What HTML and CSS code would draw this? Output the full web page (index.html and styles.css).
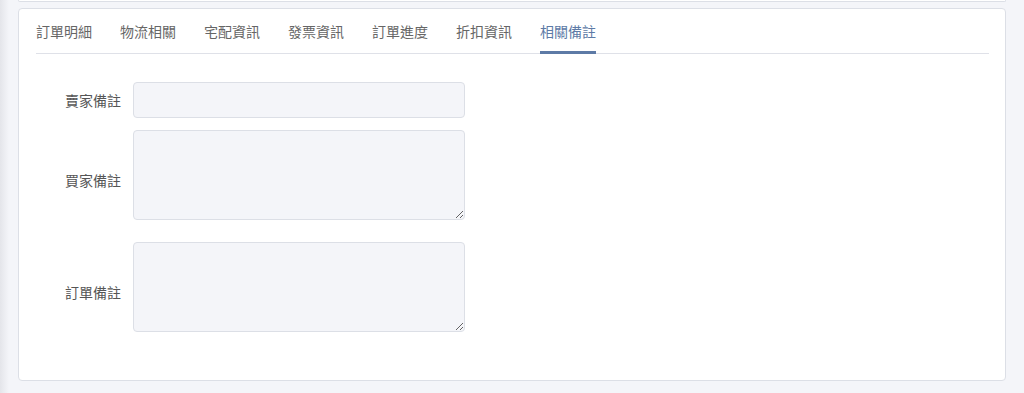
FILE: index.html
```html
<!DOCTYPE html>
<html lang="zh-Hant">
<head>
    <meta charset="UTF-8">
    <meta name="viewport" content="width=device-width, initial-scale=1.0">
    <title>訂單備註</title>
    <link rel="stylesheet" href="styles.css">
</head>
<body>
    <div class="page">
        <div class="card card-prev"></div>

        <div class="card">
            <div class="tabs">
                <div class="tab">訂單明細</div>
                <div class="tab">物流相關</div>
                <div class="tab">宅配資訊</div>
                <div class="tab">發票資訊</div>
                <div class="tab">訂單進度</div>
                <div class="tab">折扣資訊</div>
                <div class="tab active">相關備註</div>
            </div>

            <form class="form">
                <div class="form-item">
                    <label class="form-label">賣家備註</label>
                    <input class="form-input" type="text">
                </div>
                <div class="form-item">
                    <label class="form-label low">買家備註</label>
                    <textarea class="form-input textarea"></textarea>
                </div>
                <div class="form-item last">
                    <label class="form-label low">訂單備註</label>
                    <textarea class="form-input textarea"></textarea>
                </div>
            </form>
        </div>
    </div>
</body>
</html>
```

FILE: styles.css
```css
body {
    margin: 0;
    padding: 0;
    background-color: #f4f5f9;
    font-family: 'Noto Sans CJK TC', 'Noto Sans', sans-serif;
    font-size: 14px;
    color: #555;
    height: 393px;
    overflow: hidden;
}

/* sidebar shadow on the left edge */
.page {
    min-height: 393px;
    padding: 0 18px 0 18px;
    background: linear-gradient(to right, #e4e5ea 0, #f4f5f9 9px);
    box-sizing: border-box;
    width: 1024px;
}

.card {
    background: #ffffff;
    border: 1px solid #dcdfe6;
    border-radius: 4px;
    width: 988px;
    box-sizing: border-box;
    padding: 0 16px 0 17px;
}

.card-prev {
    height: 2px;
    border-top: none;
    border-radius: 0 0 4px 4px;
    margin-bottom: 6px;
}

.tabs {
    display: flex;
    gap: 28px;
    height: 44px;
    border-bottom: 1px solid #dfe1e8;
}

.tab {
    position: relative;
    line-height: 44px;
    color: #666;
    white-space: nowrap;
    cursor: pointer;
}

.tab.active {
    color: #5d7aa6;
}

.tab.active::after {
    content: '';
    position: absolute;
    left: 0;
    right: 0;
    bottom: -1px;
    height: 3px;
    background: #5d7aa6;
}

.form {
    padding: 28px 0 48px 0;
}

.form-item {
    display: flex;
    align-items: center;
    margin-bottom: 12px;
}

.form-item:nth-child(2) {
    margin-bottom: 22px;
}

.form-item.last {
    margin-bottom: 0;
}

.form-label {
    width: 85px;
    padding-right: 12px;
    text-align: right;
    color: #555;
    flex-shrink: 0;
}

.form-label.low {
    padding-top: 9px;
}

.form-input {
    width: 332px;
    height: 36px;
    box-sizing: border-box;
    background: #f4f5f9;
    border: 1px solid #dcdfe6;
    border-radius: 4px;
    padding: 6px 10px;
    font-family: inherit;
    font-size: 14px;
    color: #555;
    margin: 0;
    outline: none;
}

.textarea {
    height: 90px;
    resize: vertical;
    display: block;
}
```
